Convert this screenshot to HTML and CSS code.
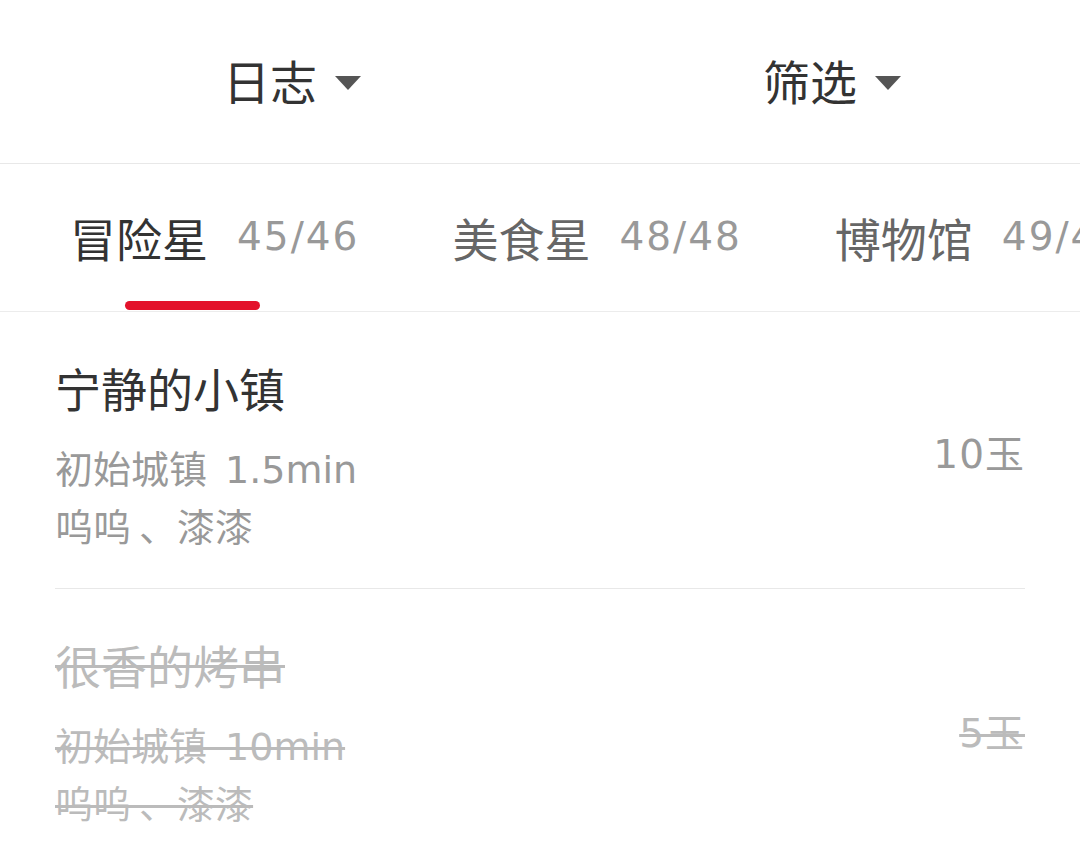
FILE: index.html
```html
<!DOCTYPE html>
<html lang="zh-CN">
  <head>
    <meta charset="utf-8">
    <title>日志</title>
    <link rel="stylesheet" href="styles.css">
  </head>
  <body>
    <div class="header">
      <div class="menu-col"><span class="menu">日志</span></div>
      <div class="menu-col"><span class="menu">筛选</span></div>
    </div>
    <div class="tabs">
      <div class="tab active">
        <span class="tab-name">冒险星</span>
        <span class="tab-count">45/46</span>
        <div class="indicator"></div>
      </div>
      <div class="tab">
        <span class="tab-name">美食星</span>
        <span class="tab-count">48/48</span>
      </div>
      <div class="tab">
        <span class="tab-name">博物馆</span>
        <span class="tab-count">49/49</span>
      </div>
    </div>
    <div class="list">
      <div class="item">
        <div class="item-info">
          <div class="item-title">宁静的小镇</div>
          <div class="item-sub place">初始城镇 1.5min</div>
          <div class="item-sub">呜呜 、漆漆</div>
        </div>
        <div class="item-reward">10玉</div>
      </div>
      <div class="item done">
        <div class="item-info">
          <div class="item-title"><s>很香的烤串</s></div>
          <div class="item-sub place"><s>初始城镇 10min</s></div>
          <div class="item-sub"><s>呜呜 、漆漆</s></div>
        </div>
        <div class="item-reward"><s>5玉</s></div>
      </div>
    </div>
  </body>
</html>
```
FILE: styles.css
```css
body {
  margin: 0;
  width: 1080px;
  height: 864px;
  overflow: hidden;
  background: #fff;
  font-family: "Noto Sans CJK SC", "Noto Sans", sans-serif;
  color: #333;
}

.header {
  display: flex;
  height: 163px;
  border-bottom: 1px solid #e8e8e8;
}

.menu-col {
  flex: 1;
  display: flex;
  justify-content: center;
  align-items: center;
}

.menu {
  position: relative;
  font-size: 47px;
  line-height: 60px;
  color: #333;
  margin-top: -4px;
}

.menu::after {
  content: "";
  position: absolute;
  left: calc(100% + 18px);
  top: 26px;
  border-left: 13px solid transparent;
  border-right: 13px solid transparent;
  border-top: 14px solid #555;
}

.tabs {
  display: flex;
  gap: 93px;
  height: 147px;
  padding-left: 70px;
  border-bottom: 1px solid #ececec;
  white-space: nowrap;
  overflow: hidden;
}

.tab {
  position: relative;
  display: flex;
  align-items: center;
  gap: 29px;
  height: 147px;
  padding-bottom: 2px;
  box-sizing: border-box;
  flex-shrink: 0;
}

.tab-name {
  font-size: 46px;
  color: #666;
}

.tab.active .tab-name {
  color: #333;
}

.tab-count {
  font-family: "DejaVu Sans", "Noto Sans CJK SC", sans-serif;
  font-size: 39px;
  letter-spacing: 2px;
  color: #999;
}

.indicator {
  position: absolute;
  left: 55px;
  bottom: 1px;
  width: 135px;
  height: 9px;
  border-radius: 5px;
  background: #e3122b;
}

.list {
  padding: 0 55px;
}

.item {
  display: flex;
  align-items: center;
  justify-content: space-between;
  padding: 45px 0 31px;
  border-bottom: 1px solid #e8e8e8;
}

.item-title {
  font-size: 46px;
  line-height: 60px;
  margin-bottom: 24px;
  color: #333;
}

.item-sub,
.item-reward {
  font-family: "DejaVu Sans", "Noto Sans CJK SC", sans-serif;
  font-size: 38px;
  line-height: 58px;
  color: #999;
  word-spacing: -4px;
}

.item-sub.place {
  word-spacing: 6px;
}

.item-reward {
  font-size: 39px;
  letter-spacing: 1px;
  margin-top: -4px;
}

.done .item-title,
.done .item-sub,
.done .item-reward {
  color: #bbb;
}

.done .item-reward {
  margin-top: 0;
}

s {
  text-decoration-thickness: 3px;
}
```
